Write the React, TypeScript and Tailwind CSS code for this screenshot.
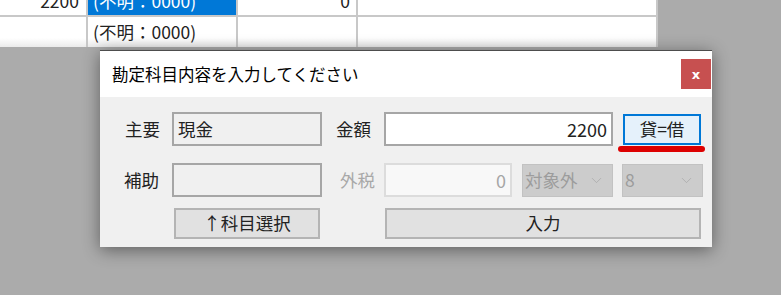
import { ChevronDown } from 'lucide-react';

const font = { fontFamily: '"Noto Sans CJK JP", "Noto Sans", sans-serif' };

const Cell = ({ w, children, className = '' }: { w: string; children?: React.ReactNode; className?: string }) => (
  <div className={`${w} shrink-0 border-r-2 border-[#c8c8c8] flex items-center px-[5px] ${className}`}>{children}</div>
);

const DisabledSelect = ({ w, label }: { w: string; label: string }) => (
  <div className={`${w} h-[33px] shrink-0 bg-[#cccccc] border border-[#c2c2c2] flex items-center justify-between pl-[2px] pr-[7px] text-[#9c9c9c]`}>
    <span>{label}</span>
    <ChevronDown size={17} strokeWidth={1.1} className="text-[#a9a9a9]" />
  </div>
);

const App = () => {
  return (
    <div className="relative w-[781px] h-[295px] overflow-hidden bg-[#ababab] text-[16px]" style={font}>
      {/* list behind the dialog */}
      <div className="w-[658px] -mt-[12px] bg-white text-[#222] text-[17.5px]">
        <div className="flex h-[29px] border-b-2 border-[#c8c8c8]">
          <Cell w="w-[88px]" className="justify-end pr-[7px]">2200</Cell>
          <Cell w="w-[150px]" className="bg-[#0078d7] text-white">(不明：0000)</Cell>
          <Cell w="w-[120px]" className="justify-end pr-[6px]">0</Cell>
          <Cell w="w-[300px]" />
        </div>
        <div className="flex h-[30px] bg-linear-to-b from-white from-70% to-[#ebebeb]">
          <Cell w="w-[88px]" />
          <Cell w="w-[150px]">(不明：0000)</Cell>
          <Cell w="w-[120px]" />
          <Cell w="w-[300px]" />
        </div>
      </div>

      {/* dialog window */}
      <div className="absolute left-[100px] top-[50px] w-[612px] h-[197px] flex flex-col border-t border-[#4d4d4d] shadow-[0_3px_16px_rgba(0,0,0,0.45)]">
        <div className="h-[46px] bg-white flex items-center justify-between pl-[12px] pr-[1px] text-black">
          <span className="text-[16.5px]">勘定科目内容を入力してください</span>
          <div className="w-[30px] h-[30px] bg-[#c75050] flex items-center justify-center text-white font-bold text-[13px] leading-none" style={{ fontFamily: '"DejaVu Sans", sans-serif' }}>
            x
          </div>
        </div>

        <div className="flex-1 bg-[#f0f0f0] text-[17.5px] text-[#222] pt-[15px]">
          {/* 主要 / 金額 */}
          <div className="flex items-center h-[34px]">
            <span className="w-[72px] pl-[25px] shrink-0">主要</span>
            <div className="w-[150px] h-[34px] shrink-0 border-2 border-[#a6a6a6] bg-[#f0f0f0] flex items-center pl-[4px]">現金</div>
            <span className="w-[62px] pl-[14px] shrink-0">金額</span>
            <div className="w-[229px] h-[34px] shrink-0 border-2 border-[#a6a6a6] bg-white flex items-center justify-end pr-[4px] text-[18px]">2200</div>
            <div className="relative ml-[10px]">
              <div className="w-[78px] h-[31px] border-2 border-[#0078d7] bg-[#e5f1fb] flex items-center justify-center">貸=借</div>
              <div className="absolute -left-[5px] top-[32px] w-[87px] h-[6px] rounded-full bg-[#dd0000]" />
            </div>
          </div>

          {/* 補助 / 外税 */}
          <div className="flex items-center h-[34px] mt-[17px]">
            <span className="w-[72px] pl-[24px] shrink-0">補助</span>
            <div className="w-[150px] h-[34px] shrink-0 border-2 border-[#a6a6a6] bg-[#f0f0f0]" />
            <span className="w-[62px] pl-[18px] shrink-0 text-[#a8a8a8]">外税</span>
            <div className="w-[128px] h-[34px] shrink-0 border-2 border-[#dcdcdc] bg-[#f8f8f8] flex items-center justify-end pr-[4px] text-[#a6a6a6] text-[18px]">0</div>
            <div className="ml-[10px]">
              <DisabledSelect w="w-[91px]" label="対象外" />
            </div>
            <div className="ml-[9px]">
              <DisabledSelect w="w-[81px]" label="8" />
            </div>
          </div>

          {/* buttons */}
          <div className="flex items-center h-[32px] mt-[10px]">
            <div className="ml-[74px] w-[146px] h-[31px] shrink-0 border-2 border-[#b4b4b4] bg-[#e1e1e1] flex items-center justify-center">↑科目選択</div>
            <div className="ml-[65px] w-[316px] h-[31px] shrink-0 border-2 border-[#b4b4b4] bg-[#e1e1e1] flex items-center justify-center">入力</div>
          </div>
        </div>
      </div>
    </div>
  );
};

export default App;
